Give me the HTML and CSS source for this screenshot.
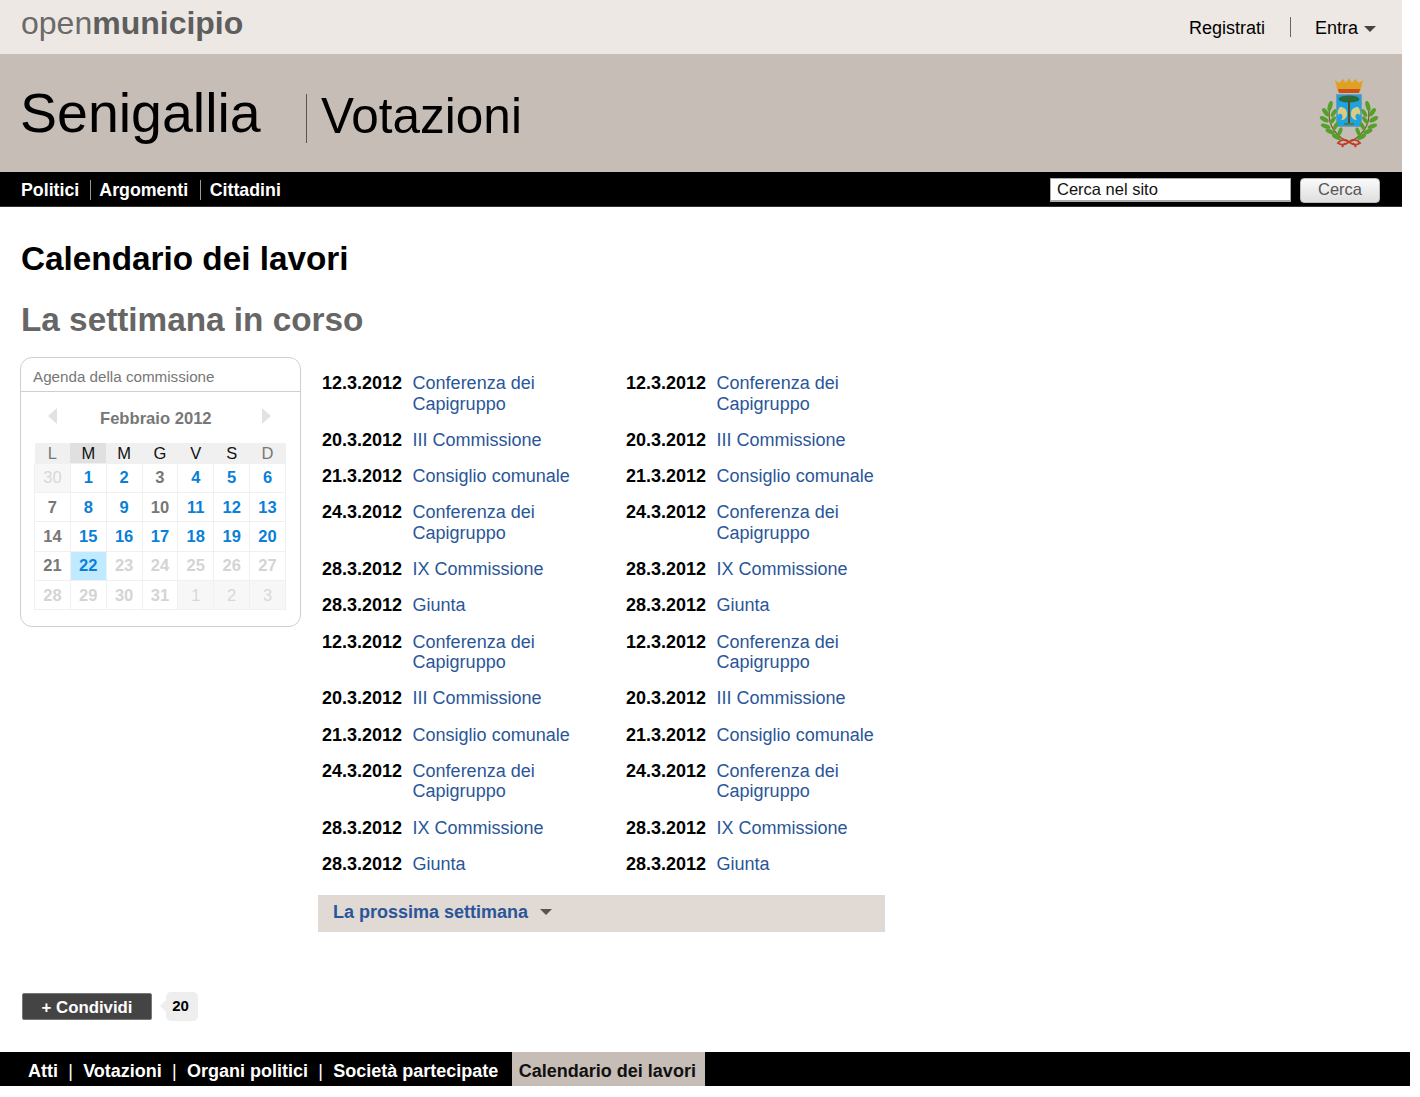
FILE: index.html
```html
<!DOCTYPE html>
<html lang="it">
<head>
<meta charset="utf-8">
<title>Calendario dei lavori</title>
<link rel="stylesheet" href="styles.css">
</head>
<body>
<div class="site">
  <div class="topbar">
    <div class="brand">open<b>municipio</b></div>
    <div class="account">
      <a class="reg">Registrati</a>
      <a class="login">Entra <span class="caret"></span></a>
    </div>
  </div>
  <div class="masthead">
    <div class="city">Senigallia</div>
    <div class="section">Votazioni</div>
    <svg class="arms" viewBox="0 0 62 72" width="62" height="72" aria-hidden="true">
      <defs><filter id="soft"><feGaussianBlur stdDeviation="0.35"/></filter></defs>
      <g filter="url(#soft)">
        <path d="M17 2l4 3 4-4 3 4 3-5 3 5 3-4 4 4 4-3-3 12H20z" fill="#e0a020"/>
        <path d="M20 11h22l-1 4H21z" fill="#c9501a"/>
        <path d="M18 16h26v33H18z" fill="#7d9bb0"/>
        <path d="M19 17h24v31H19z" fill="#1fa3e0"/>
        <ellipse cx="31" cy="21" rx="10.500" ry="3.600" fill="#2a6a3a"/>
        <path d="M30 23h2v22h-2z" fill="#5e4a24"/>
        <path d="M26 45h10v2H26z" fill="#5e7a3a"/>
        <path d="M22 29c4 0 7 2 7 7 0 4-3 6-6 6 2-2 2-5 0-6-2-1-3 1-3 2-1-4 0-7 2-9z" fill="#dccb82"/>
        <path d="M40 29c-4 0-7 2-7 7 0 4 3 6 6 6-2-2-2-5 0-6 2-1 3 1 3 2 1-4 0-7-2-9z" fill="#dccb82"/>
        <g transform="translate(31 65) scale(.9 .88) translate(-31 -65)">
          <path d="M10 24c-3 13 0 28 18 39M52 24c3 13 0 28-18 39" fill="none" stroke="#7a5a2a" stroke-width="1.300"/>
          <g fill="#55a02b">
            <ellipse cx="10" cy="23" rx="2.500" ry="6" transform="rotate(15 10 23)"/>
            <ellipse cx="5" cy="30" rx="2.500" ry="5.500" transform="rotate(-35 5 30)"/>
            <ellipse cx="14" cy="31" rx="2.200" ry="5" transform="rotate(30 14 31)"/>
            <ellipse cx="3.500" cy="38" rx="2.500" ry="5.500" transform="rotate(-60 3.500 38)"/>
            <ellipse cx="13" cy="39" rx="2.200" ry="5" transform="rotate(35 13 39)"/>
            <ellipse cx="5" cy="46" rx="2.500" ry="5.500" transform="rotate(-70 5 46)"/>
            <ellipse cx="16" cy="46" rx="2.200" ry="5" transform="rotate(25 16 46)"/>
            <ellipse cx="10" cy="52" rx="2.500" ry="5.500" transform="rotate(-65 10 52)"/>
            <ellipse cx="21" cy="52" rx="2.200" ry="5" transform="rotate(20 21 52)"/>
            <ellipse cx="17" cy="58" rx="2.500" ry="5.500" transform="rotate(-60 17 58)"/>
            <ellipse cx="52" cy="23" rx="2.500" ry="6" transform="rotate(-15 52 23)"/>
            <ellipse cx="57" cy="30" rx="2.500" ry="5.500" transform="rotate(35 57 30)"/>
            <ellipse cx="48" cy="31" rx="2.200" ry="5" transform="rotate(-30 48 31)"/>
            <ellipse cx="58.500" cy="38" rx="2.500" ry="5.500" transform="rotate(60 58.500 38)"/>
            <ellipse cx="49" cy="39" rx="2.200" ry="5" transform="rotate(-35 49 39)"/>
            <ellipse cx="57" cy="46" rx="2.500" ry="5.500" transform="rotate(70 57 46)"/>
            <ellipse cx="46" cy="46" rx="2.200" ry="5" transform="rotate(-25 46 46)"/>
            <ellipse cx="52" cy="52" rx="2.500" ry="5.500" transform="rotate(65 52 52)"/>
            <ellipse cx="41" cy="52" rx="2.200" ry="5" transform="rotate(-20 41 52)"/>
            <ellipse cx="45" cy="58" rx="2.500" ry="5.500" transform="rotate(60 45 58)"/>
          </g>
        </g>
        <path d="M20 65c3-4 7-4 11-1 4-3 8-3 11 1-4 3-7 2-11-1-4 3-7 4-11 1zM27 65l-3 4M35 65l3 4" fill="none" stroke="#c23a26" stroke-width="2"/>
      </g>
    </svg>
  </div>
  <div class="mainnav">
    <nav class="navlinks">
      <a>Politici</a>
      <a>Argomenti</a>
      <a>Cittadini</a>
    </nav>
    <form class="search">
      <input class="search-input" type="text" value="Cerca nel sito">
      <button class="search-btn" type="button">Cerca</button>
    </form>
  </div>
  <main class="content">
    <h1>Calendario dei lavori</h1>
    <h2>La settimana in corso</h2>
    <div class="columns">
      <aside class="agenda">
        <div class="agenda-title">Agenda della commissione</div>
        <div class="month">
          <span class="arrow-left"></span>
          <span class="month-name">Febbraio 2012</span>
          <span class="arrow-right"></span>
        </div>
        <table class="cal">
          <thead>
            <tr><th class="dim">L</th><th class="today-col">M</th><th>M</th><th>G</th><th>V</th><th>S</th><th class="dim">D</th></tr>
          </thead>
          <tbody>
            <tr><td class="out">30</td><td class="ev">1</td><td class="ev">2</td><td>3</td><td class="ev">4</td><td class="ev">5</td><td class="ev">6</td></tr>
            <tr><td>7</td><td class="ev">8</td><td class="ev">9</td><td>10</td><td class="ev">11</td><td class="ev">12</td><td class="ev">13</td></tr>
            <tr><td>14</td><td class="ev">15</td><td class="ev">16</td><td class="ev">17</td><td class="ev">18</td><td class="ev">19</td><td class="ev">20</td></tr>
            <tr><td>21</td><td class="ev cur">22</td><td class="fut">23</td><td class="fut">24</td><td class="fut">25</td><td class="fut">26</td><td class="fut">27</td></tr>
            <tr><td class="fut">28</td><td class="fut">29</td><td class="fut">30</td><td class="fut">31</td><td class="out">1</td><td class="out">2</td><td class="out">3</td></tr>
          </tbody>
        </table>
      </aside>
      <section class="events">
        <div class="event-grid">
          <div class="event-list">
            <div class="event"><b>12.3.2012</b><a>Conferenza dei Capigruppo</a></div>
            <div class="event"><b>20.3.2012</b><a>III Commissione</a></div>
            <div class="event"><b>21.3.2012</b><a>Consiglio comunale</a></div>
            <div class="event"><b>24.3.2012</b><a>Conferenza dei Capigruppo</a></div>
            <div class="event"><b>28.3.2012</b><a>IX Commissione</a></div>
            <div class="event"><b>28.3.2012</b><a>Giunta</a></div>
            <div class="event"><b>12.3.2012</b><a>Conferenza dei Capigruppo</a></div>
            <div class="event"><b>20.3.2012</b><a>III Commissione</a></div>
            <div class="event"><b>21.3.2012</b><a>Consiglio comunale</a></div>
            <div class="event"><b>24.3.2012</b><a>Conferenza dei Capigruppo</a></div>
            <div class="event"><b>28.3.2012</b><a>IX Commissione</a></div>
            <div class="event"><b>28.3.2012</b><a>Giunta</a></div>
          </div>
          <div class="event-list">
            <div class="event"><b>12.3.2012</b><a>Conferenza dei Capigruppo</a></div>
            <div class="event"><b>20.3.2012</b><a>III Commissione</a></div>
            <div class="event"><b>21.3.2012</b><a>Consiglio comunale</a></div>
            <div class="event"><b>24.3.2012</b><a>Conferenza dei Capigruppo</a></div>
            <div class="event"><b>28.3.2012</b><a>IX Commissione</a></div>
            <div class="event"><b>28.3.2012</b><a>Giunta</a></div>
            <div class="event"><b>12.3.2012</b><a>Conferenza dei Capigruppo</a></div>
            <div class="event"><b>20.3.2012</b><a>III Commissione</a></div>
            <div class="event"><b>21.3.2012</b><a>Consiglio comunale</a></div>
            <div class="event"><b>24.3.2012</b><a>Conferenza dei Capigruppo</a></div>
            <div class="event"><b>28.3.2012</b><a>IX Commissione</a></div>
            <div class="event"><b>28.3.2012</b><a>Giunta</a></div>
          </div>
        </div>
        <div class="next-week"><a>La prossima settimana</a><span class="caret dark"></span></div>
      </section>
    </div>
    <div class="share">
      <a class="share-btn">+ Condividi</a>
      <span class="share-count">20</span>
    </div>
  </main>
</div>
<footer class="foot">
  <a>Atti</a><i>|</i><a>Votazioni</a><i>|</i><a>Organi politici</a><i>|</i><a>Società partecipate</a><a class="active">Calendario dei lavori</a>
</footer>
</body>
</html>
```
FILE: styles.css
```css
* { box-sizing: border-box; }
html, body { margin: 0; padding: 0; overflow: hidden; }
body { height: 1097px; background: #fff; color: #000; font-family: "Liberation Sans", Arial, sans-serif; font-size: 18px; }
a { color: inherit; text-decoration: none; }
.site { width: 1402px; }

.topbar { height: 54px; background: #ede8e4; display: flex; justify-content: space-between; padding: 0 26px 0 21px; }
.brand { font-size: 32px; line-height: 47px; color: #6a6a6a; }
.brand b { color: #5e5e5e; }
.account { display: flex; align-items: center; height: 54px; }
.reg { padding-right: 25px; border-right: 1px solid #666; height: 20px; line-height: 22px; }
.login { padding: 2px 0 0 24px; display: flex; align-items: center; gap: 6px; }
.caret { display: inline-block; width: 0; height: 0; border: 6px solid transparent; border-top-color: #444; border-bottom: 0; margin-top: 2px; }

.masthead { height: 118px; background: #c6bdb7; display: flex; align-items: flex-start; padding: 0 22px 0 20px; }
.city { font-size: 55.5px; line-height: 64px; margin-top: 27px; width: 286px; }
.section { font-size: 49.5px; line-height: 44px; margin-top: 40px; border-left: 1px solid #555; padding-left: 14px; height: 49px; }
.arms { margin: 24px 0 0 auto; }

.mainnav { height: 35px; background: #000; border-bottom: 1px solid #333; display: flex; justify-content: space-between; align-items: center; padding: 2px 22px 0 21px; }
.navlinks { display: flex; color: #fff; font-weight: 700; font-size: 17.8px; }
.navlinks a { padding: 0 12px 0 8.5px; border-left: 1px solid #999; line-height: 20px; }
.navlinks a:first-child { padding: 0 10.5px 0 0; border-left: 0; }
.search { display: flex; align-items: center; gap: 9px; }
.search-input { width: 241px; height: 24px; padding: 0 6px; border: 1px solid #aaa; border-width: 1px 1px 2px; background: #fff; font: 16.5px "Liberation Sans", Arial, sans-serif; color: #111; border-radius: 0; outline: 0; }
.search-btn { width: 80px; height: 25px; padding: 0 0 2px; border: 1px solid #bbb; border-radius: 4px; background: linear-gradient(#fafafa, #dedede); font: 16.5px "Liberation Sans", Arial, sans-serif; color: #555; }

.content { padding: 0 0 0 20px; }
h1 { font-size: 33.3px; line-height: 40px; font-weight: 700; margin: 32px 0 0 1px; }
h2 { font-size: 33.3px; line-height: 40px; font-weight: 700; color: #666; margin: 21px 0 0 1px; }
.columns { display: flex; gap: 17px; margin-top: 17px; width: 1382px; align-items: flex-start; }

.agenda { width: 281px; height: 270px; border: 1px solid #cfcfcf; border-radius: 12px; }
.agenda-title { height: 34px; border-bottom: 1px solid #cfcfcf; font-size: 15.2px; line-height: 37px; color: #777; padding-left: 12px; }
.month { display: flex; align-items: center; padding-left: 27px; height: 51px; }
.month-name { font-size: 16.6px; font-weight: 700; color: #777; margin: 2px 50px 0 43px; }
.arrow-left, .arrow-right { width: 0; height: 0; border: 8px solid transparent; margin-top: -3px; }
.arrow-left { border-left-width: 0; border-right: 9px solid #e2e2e2; }
.arrow-right { border-right-width: 0; border-left: 9px solid #e2e2e2; }
.cal { margin-left: 13px; border-collapse: collapse; table-layout: fixed; width: 252px; }
.cal th { height: 20px; background: #f0f0f0; font-size: 16.5px; line-height: 16px; font-weight: 400; color: #111; padding: 1px 0 0; }
.cal th.dim { color: #777; }
.cal th.today-col { background: #e0e0e0; }
.cal td { height: 29.4px; border: 1px solid #f0f0f0; padding: 0; text-align: center; font-size: 16.5px; font-weight: 700; color: #777; }
.cal td.ev { color: #0a7fd8; }
.cal td.cur { background: #c0eaff; }
.cal td.fut { color: #d4d4d4; }
.cal td.out { background: #f7f7f7; color: #d8d8d8; font-weight: 400; }

.events { width: 567px; }
.event-grid { display: grid; grid-template-columns: 304px 263px; padding-top: 16.3px; }
.event { display: grid; grid-template-columns: 90.6px 172px; padding: 0 0 15.6px 4px; line-height: 20.6px; }
.event a { color: #2a5699; }
.next-week { height: 37px; background: #e0d9d4; margin-top: 4.9px; padding: 0 0 2px 15px; font-weight: 700; color: #2a5699; display: flex; align-items: center; gap: 12px; }
.caret.dark { border-top-color: #555; margin-top: 0; }

.share { display: flex; align-items: center; margin: 60px 0 0 2px; gap: 14px; }
.share-btn { width: 130px; height: 27px; background: #444; border: 1px solid #777; border-radius: 2px; color: #fff; font-weight: 700; font-size: 16.8px; line-height: 27px; text-align: center; }
.share-count { position: relative; width: 32px; height: 29px; background: #eee; border-radius: 5px; font-size: 15px; font-weight: 700; line-height: 27px; padding-right: 3px; text-align: center; }
.share-count::before { content: ""; position: absolute; left: -6px; top: 8px; border: 6px solid transparent; border-left: 0; border-right-color: #eee; }

.foot { margin-top: 31px; width: 1410px; height: 34px; background: #000; color: #fff; font-weight: 700; display: flex; padding-left: 28px; line-height: 38px; }
.foot i { font-style: normal; font-weight: 400; padding: 0 10.25px; }
.foot a.active { background: #c6bdb7; color: #111; margin-left: 13.5px; padding: 0 9px 0 7px; }
```
